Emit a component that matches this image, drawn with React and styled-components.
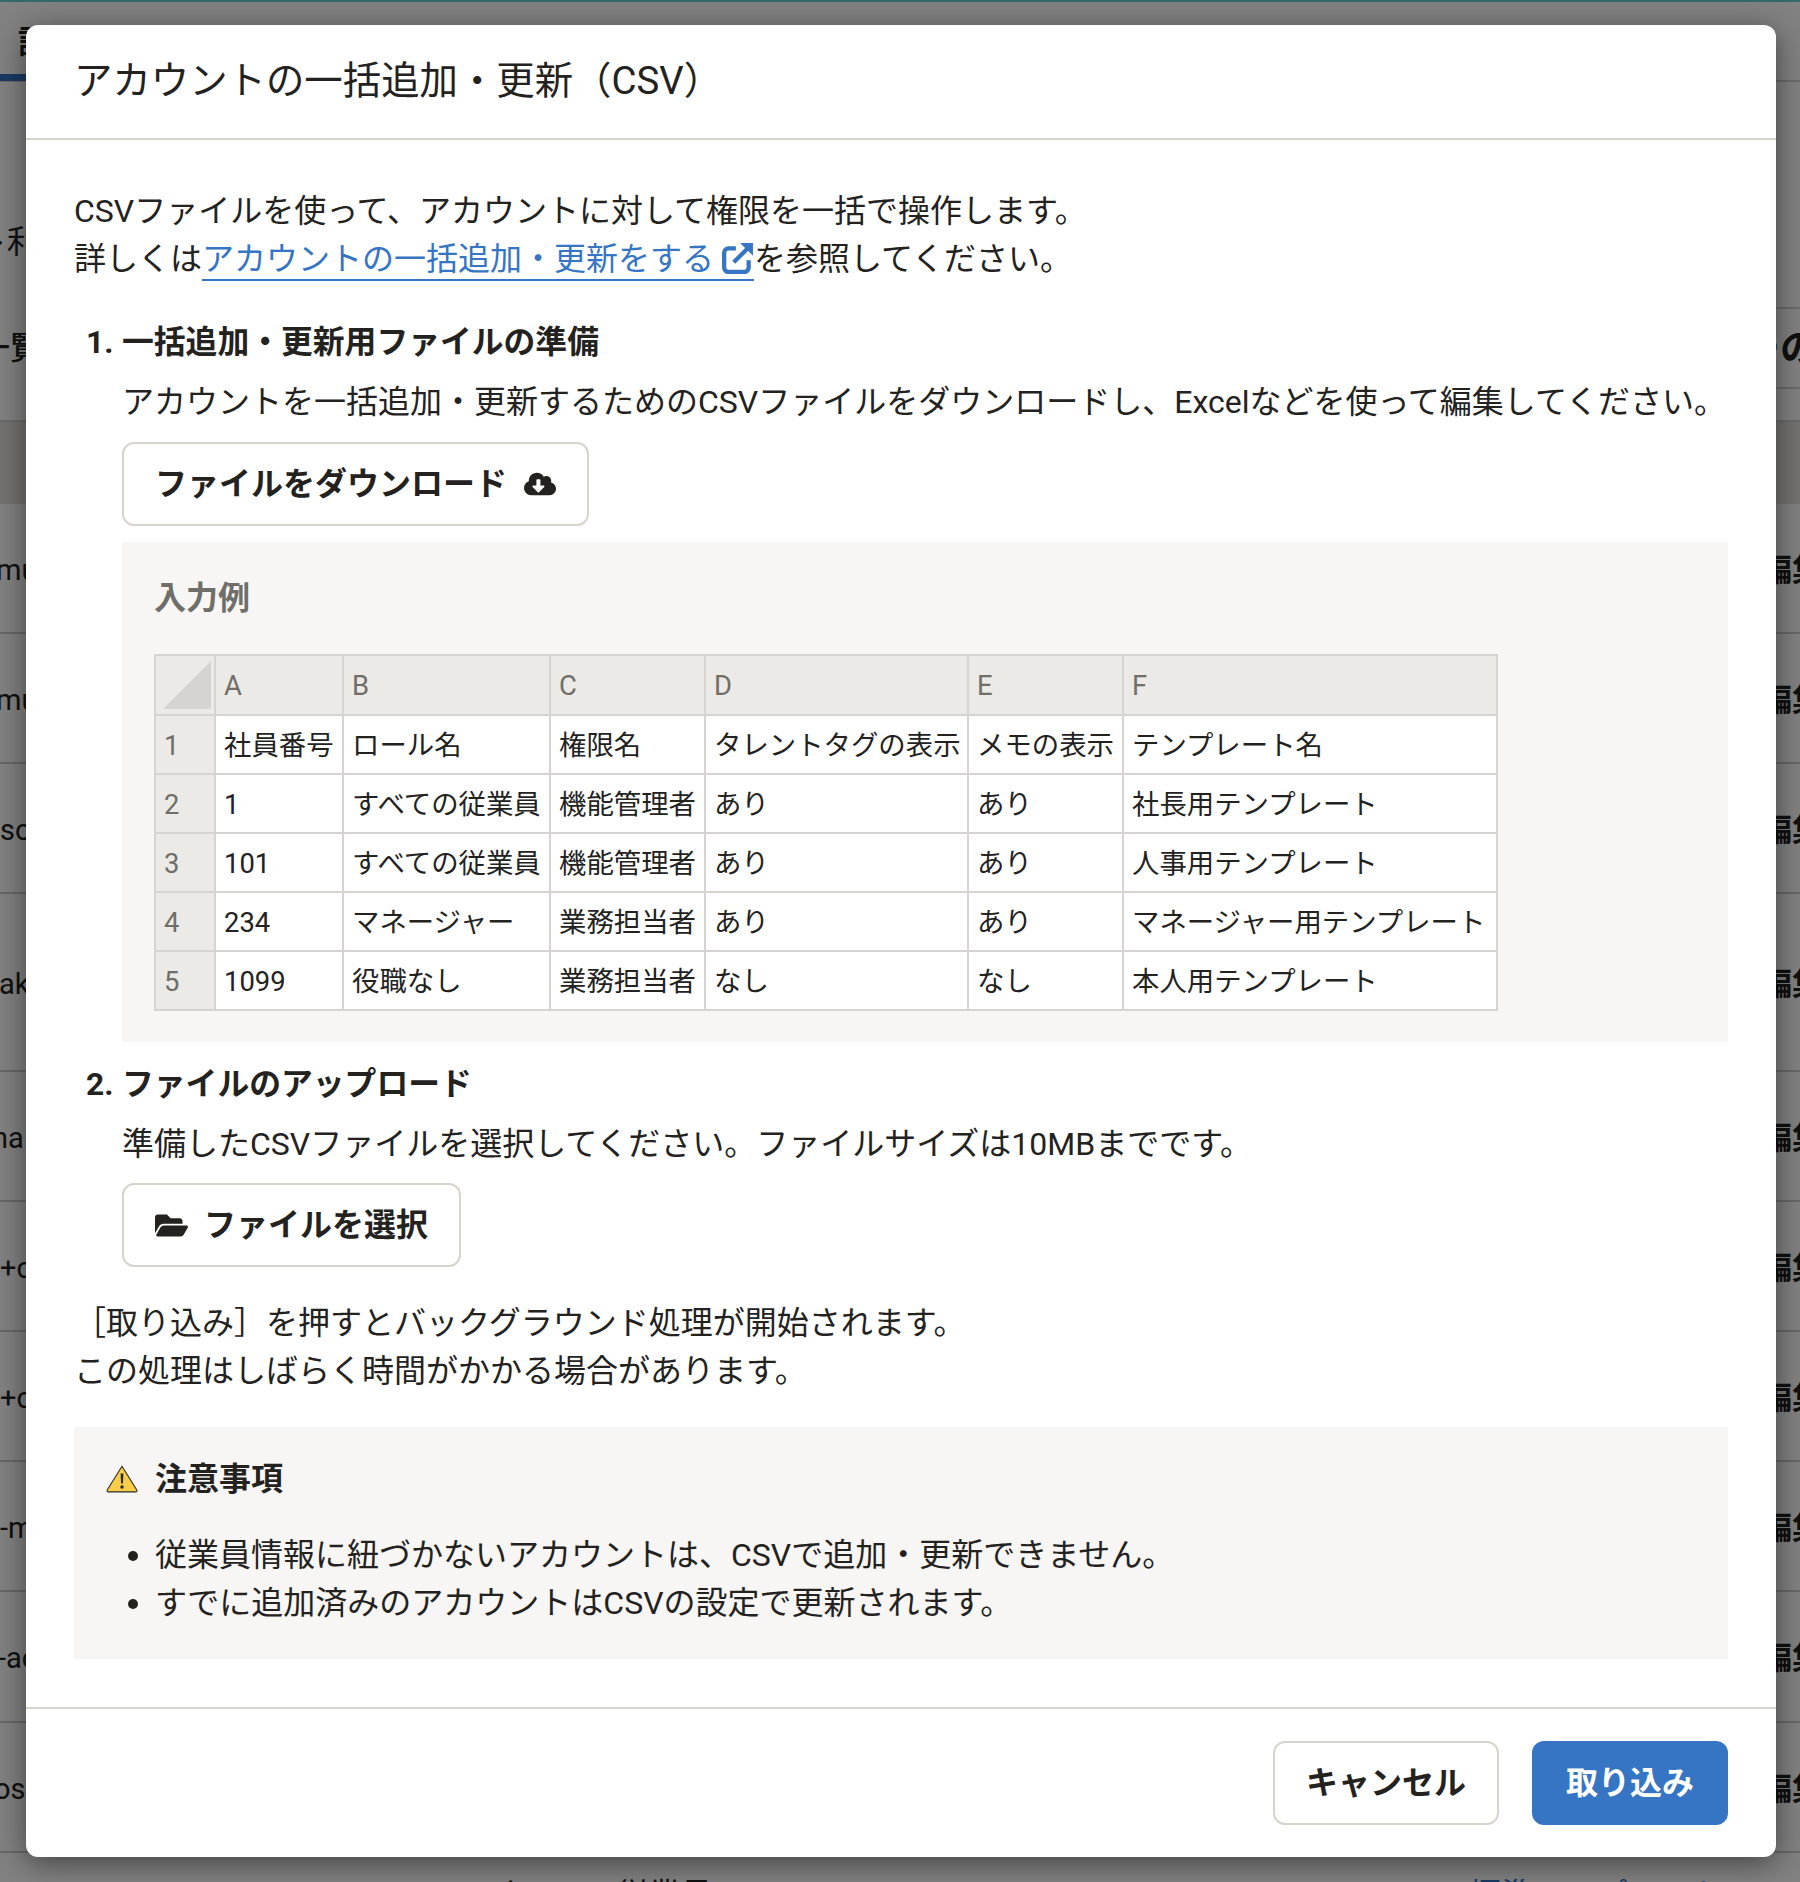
import React from "react";
import styled, { createGlobalStyle } from "styled-components";
import { FaCloudDownloadAlt, FaFolderOpen } from "react-icons/fa";

const GlobalStyle = createGlobalStyle`
  html, body {
    margin: 0;
    padding: 0;
    background: #fff;
  }
  body {
    font-family: Roboto, "Noto Sans CJK JP", sans-serif;
    color: #23221e;
    font-size: 32px;
    line-height: 48px;
  }
`;

const Page = styled.div`
  position: relative;
  width: 1800px;
  height: 1882px;
  overflow: hidden;
`;

const TopStrip = styled.div`
  height: 2px;
  background: #63d0d8;
`;

const TabBar = styled.div`
  height: 80px;
  display: flex;
  border-bottom: 2px solid #d6d3cf;
  box-sizing: border-box;
`;

const Tab = styled.div`
  width: 120px;
  padding: 18px 0 0 18px;
  box-sizing: border-box;
  font-weight: 700;
  line-height: 44px;
  border-bottom: 7px solid #3575c3;
  margin-bottom: -1px;
`;

const IntroRow = styled.div`
  height: 225px;
  padding-top: 140px;
  box-sizing: border-box;
  line-height: 40px;
  white-space: nowrap;
  & > span {
    margin-left: -25px;
  }
`;

const TitleRow = styled.div`
  height: 82px;
  display: flex;
  align-items: center;
  margin-bottom: 31px;
  font-size: 32px;
  font-weight: 500;
  & > span {
    margin-left: -22px;
  }
`;

const TitleEnd = styled.div`
  margin-left: auto;
  width: 300px;
  height: 100%;
  display: flex;
  align-items: center;
  justify-content: flex-end;
  border-top: 2px solid #d6d3cf;
  border-bottom: 2px solid #d6d3cf;
  box-sizing: border-box;
  font-weight: 700;
  font-size: 38px;
  white-space: nowrap;
  & > span {
    margin-right: -18px;
  }
`;

const HeadBand = styled.div`
  height: 84px;
  background: #e4e2dd;
  border-top: 2px solid #d6d3cf;
  box-sizing: border-box;
`;

const Row = styled.div`
  height: ${(props) => props.$height}px;
  display: flex;
  align-items: center;
  justify-content: space-between;
  padding-top: 3px;
  border-bottom: 2px solid #cfcdc9;
  box-sizing: border-box;
  white-space: nowrap;
`;

const RowId = styled.span`
  margin-left: ${(props) => props.$shift}px;
  font-size: 29px;
`;

const RowAction = styled.span`
  font-weight: 700;
  margin-right: -24px;
`;

const TailRow = styled.div`
  padding-top: 18px;
  display: flex;
  white-space: nowrap;
`;

const TailRole = styled.span`
  margin-left: 492px;
`;

const TailLink = styled.span`
  margin-left: 756px;
  color: #3575c3;
`;

const Overlay = styled.div`
  position: absolute;
  inset: 0;
  background: rgba(0, 0, 0, 0.49);
`;

const Modal = styled.div`
  position: absolute;
  top: 25px;
  left: 26px;
  width: 1750px;
  height: 1832px;
  display: flex;
  flex-direction: column;
  background: #fff;
  border-radius: 12px;
  box-shadow: 0 6px 30px rgba(0, 0, 0, 0.5);
`;

const Header = styled.header`
  height: 115px;
  flex: none;
  box-sizing: border-box;
  display: flex;
  align-items: center;
  padding: 0 48px 2px;
  border-bottom: 2px solid #d6d4cd;
`;

const Title = styled.h1`
  margin: 0;
  font-size: 38.4px;
  line-height: 56px;
  font-weight: 400;
`;

const Body = styled.div`
  flex: 1;
  padding: 47px 48px 0;
`;

const Para = styled.p`
  margin: ${(props) => props.$top || 0}px 0 0;
  white-space: nowrap;
`;

const DocLink = styled.a`
  color: #3575c3;
  text-decoration: none;
  border-bottom: 2px solid #3575c3;
  padding-bottom: 1px;
  & svg {
    width: 32px;
    height: 32px;
    margin-left: 8px;
    vertical-align: -4px;
  }
`;

const Step = styled.section`
  margin-top: ${(props) => props.$top}px;
`;

const StepTitle = styled.h2`
  margin: 0;
  display: flex;
  font-size: 31.8px;
  line-height: 48px;
  font-weight: 700;
  padding-left: 12px;
`;

const StepNo = styled.span`
  width: 36px;
`;

const StepBody = styled.div`
  padding-left: 48px;
`;

const OutlineButton = styled.button`
  display: inline-flex;
  align-items: center;
  justify-content: center;
  gap: ${(props) => props.$gap || 0}px;
  height: 84px;
  padding: 0 ${(props) => props.$pad}px;
  box-sizing: border-box;
  background: #fff;
  color: #23221e;
  border: 2px solid #d6d4cd;
  border-radius: 12px;
  font: 700 32px/48px Roboto, "Noto Sans CJK JP", sans-serif;
`;

const StepButton = styled(OutlineButton)`
  display: flex;
  margin-top: ${(props) => props.$top}px;
`;

const PrimaryButton = styled(OutlineButton)`
  background: #3575c3;
  border-color: #3575c3;
  color: #fff;
`;

const ExampleBox = styled.div`
  margin-top: 16px;
  padding: 32px 32px 31px;
  background: #f7f6f4;
`;

const ExampleTitle = styled.div`
  font-weight: 700;
  color: #6f6e68;
  margin-bottom: 32px;
`;

const Sheet = styled.table`
  width: 1342px;
  table-layout: fixed;
  border-collapse: collapse;
  background: #fff;
  font-size: 27.4px;
  line-height: 40px;
  border: 2px solid #d5d4d0;
`;

const SheetHead = styled.th`
  height: ${(props) => props.$height || 59}px;
  padding: 2px 0 0 8px;
  box-sizing: border-box;
  background: #ebeae7;
  color: #6f6e68;
  font-weight: 400;
  text-align: left;
  border: 2px solid #d5d4d0;
`;

const CornerHead = styled(SheetHead)`
  padding: 0 0 0 8px;
`;

const Corner = styled.div`
  width: 48px;
  height: 48px;
  margin: 0 0 0 -1px;
  background: #d5d4d0;
  clip-path: polygon(100% 0, 100% 100%, 0 100%);
`;

const SheetCell = styled.td`
  height: 59px;
  padding: 2px 0 0 8px;
  box-sizing: border-box;
  white-space: nowrap;
  border: 2px solid #d5d4d0;
`;

const Notice = styled.div`
  margin-top: 32px;
  height: 232px;
  box-sizing: border-box;
  padding: 28px 32px 0;
  background: #f7f6f4;
`;

const NoticeTitle = styled.div`
  display: flex;
  align-items: center;
  gap: 17px;
  font-weight: 700;
  & svg {
    width: 32px;
    height: 28px;
  }
`;

const NoticeList = styled.ul`
  margin: 28px 0 0;
  padding: 0 0 0 49px;
  white-space: nowrap;
`;

const Footer = styled.footer`
  flex: none;
  height: 150px;
  box-sizing: border-box;
  display: flex;
  justify-content: flex-end;
  align-items: flex-start;
  gap: 33px;
  padding: 32px 48px 0;
  border-top: 2px solid #d6d4cd;
`;

const listRows = [
  { id: "mu", shift: -4, height: 130 },
  { id: "mu", shift: -4, height: 130 },
  { id: "so", shift: 0, height: 130 },
  { id: "ak", shift: -1, height: 178 },
  { id: "ha", shift: -8, height: 130 },
  { id: "+c", shift: 0, height: 130 },
  { id: "+c", shift: 0, height: 130 },
  { id: "-m", shift: 0, height: 130 },
  { id: "-ac", shift: -2, height: 131 },
  { id: "os", shift: -6, height: 130 },
];

const sheetColumns = [60, 128, 207, 155, 263, 155, 374];

const sheetRows = [
  ["社員番号", "ロール名", "権限名", "タレントタグの表示", "メモの表示", "テンプレート名"],
  ["1", "すべての従業員", "機能管理者", "あり", "あり", "社長用テンプレート"],
  ["101", "すべての従業員", "機能管理者", "あり", "あり", "人事用テンプレート"],
  ["234", "マネージャー", "業務担当者", "あり", "あり", "マネージャー用テンプレート"],
  ["1099", "役職なし", "業務担当者", "なし", "なし", "本人用テンプレート"],
];

const ExternalIcon = () => (
  <svg viewBox="0 0 30 30" fill="none" stroke="#3575c3" strokeWidth="4">
    <path d="M13 6H6a4 4 0 0 0-4 4v14a4 4 0 0 0 4 4h15a4 4 0 0 0 4-4v-7" />
    <path d="M11 19 24 6" />
    <path d="M17 1h12v12z" fill="#3575c3" stroke="none" />
  </svg>
);

const WarningIcon = () => (
  <svg viewBox="0 0 32 28">
    <path
      d="M16 1.2 30.8 25a1.2 1.2 0 0 1-1 1.9H2.2a1.2 1.2 0 0 1-1-1.9z"
      fill="#f7cd4a"
      stroke="#2a2a26"
      strokeWidth="1.1"
      strokeLinejoin="round"
    />
    <path d="M14.6 8.5h2.8l-.5 10h-1.8z" fill="#2a2a26" />
    <circle cx="16" cy="22" r="1.7" fill="#2a2a26" />
  </svg>
);

const App = () => {
  return (
    <Page>
      <GlobalStyle />
      <TopStrip />
      <TabBar>
        <Tab>設定</Tab>
      </TabBar>
      <IntroRow>
        <span>ト利用</span>
      </IntroRow>
      <TitleRow>
        <span>一覧</span>
        <TitleEnd>
          <span>ーの</span>
        </TitleEnd>
      </TitleRow>
      <HeadBand />
      {listRows.map((row, i) => (
        <Row key={i} $height={row.height}>
          <RowId $shift={row.shift}>{row.id}</RowId>
          <RowAction>編集</RowAction>
        </Row>
      ))}
      <TailRow>
        <TailRole>すべての従業員</TailRole>
        <TailLink>標準テンプレート</TailLink>
      </TailRow>
      <Overlay />
      <Modal>
        <Header>
          <Title>アカウントの一括追加・更新（CSV）</Title>
        </Header>
        <Body>
          <Para>CSVファイルを使って、アカウントに対して権限を一括で操作します。</Para>
          <Para>
            詳しくは
            <DocLink>
              アカウントの一括追加・更新をする
              <ExternalIcon />
            </DocLink>
            を参照してください。
          </Para>
          <Step $top={35}>
            <StepTitle>
              <StepNo>1.</StepNo>
              一括追加・更新用ファイルの準備
            </StepTitle>
            <StepBody>
              <Para $top={12}>
                アカウントを一括追加・更新するためのCSVファイルをダウンロードし、Excelなどを使って編集してください。
              </Para>
              <StepButton $top={16} $gap={17} $pad={31}>
                ファイルをダウンロード
                <FaCloudDownloadAlt size={32} />
              </StepButton>
              <ExampleBox>
                <ExampleTitle>入力例</ExampleTitle>
                <Sheet>
                  <colgroup>
                    {sheetColumns.map((width, i) => (
                      <col key={i} width={width} />
                    ))}
                  </colgroup>
                  <thead>
                    <tr>
                      <CornerHead $height={60}>
                        <Corner />
                      </CornerHead>
                      {["A", "B", "C", "D", "E", "F"].map((label) => (
                        <SheetHead key={label} $height={60}>
                          {label}
                        </SheetHead>
                      ))}
                    </tr>
                  </thead>
                  <tbody>
                    {sheetRows.map((cells, i) => (
                      <tr key={i}>
                        <SheetHead>{i + 1}</SheetHead>
                        {cells.map((cell, j) => (
                          <SheetCell key={j}>{cell}</SheetCell>
                        ))}
                      </tr>
                    ))}
                  </tbody>
                </Sheet>
              </ExampleBox>
            </StepBody>
          </Step>
          <Step $top={18}>
            <StepTitle>
              <StepNo>2.</StepNo>
              ファイルのアップロード
            </StepTitle>
            <StepBody>
              <Para $top={12}>
                準備したCSVファイルを選択してください。ファイルサイズは10MBまでです。
              </Para>
              <StepButton $top={15} $gap={16} $pad={31}>
                <FaFolderOpen size={33} />
                ファイルを選択
              </StepButton>
            </StepBody>
          </Step>
          <Para $top={32}>［取り込み］を押すとバックグラウンド処理が開始されます。</Para>
          <Para>この処理はしばらく時間がかかる場合があります。</Para>
          <Notice>
            <NoticeTitle>
              <WarningIcon />
              注意事項
            </NoticeTitle>
            <NoticeList>
              <li>従業員情報に紐づかないアカウントは、CSVで追加・更新できません。</li>
              <li>すでに追加済みのアカウントはCSVの設定で更新されます。</li>
            </NoticeList>
          </Notice>
        </Body>
        <Footer>
          <OutlineButton $pad={31}>キャンセル</OutlineButton>
          <PrimaryButton $pad={32}>取り込み</PrimaryButton>
        </Footer>
      </Modal>
    </Page>
  );
};

export default App;
